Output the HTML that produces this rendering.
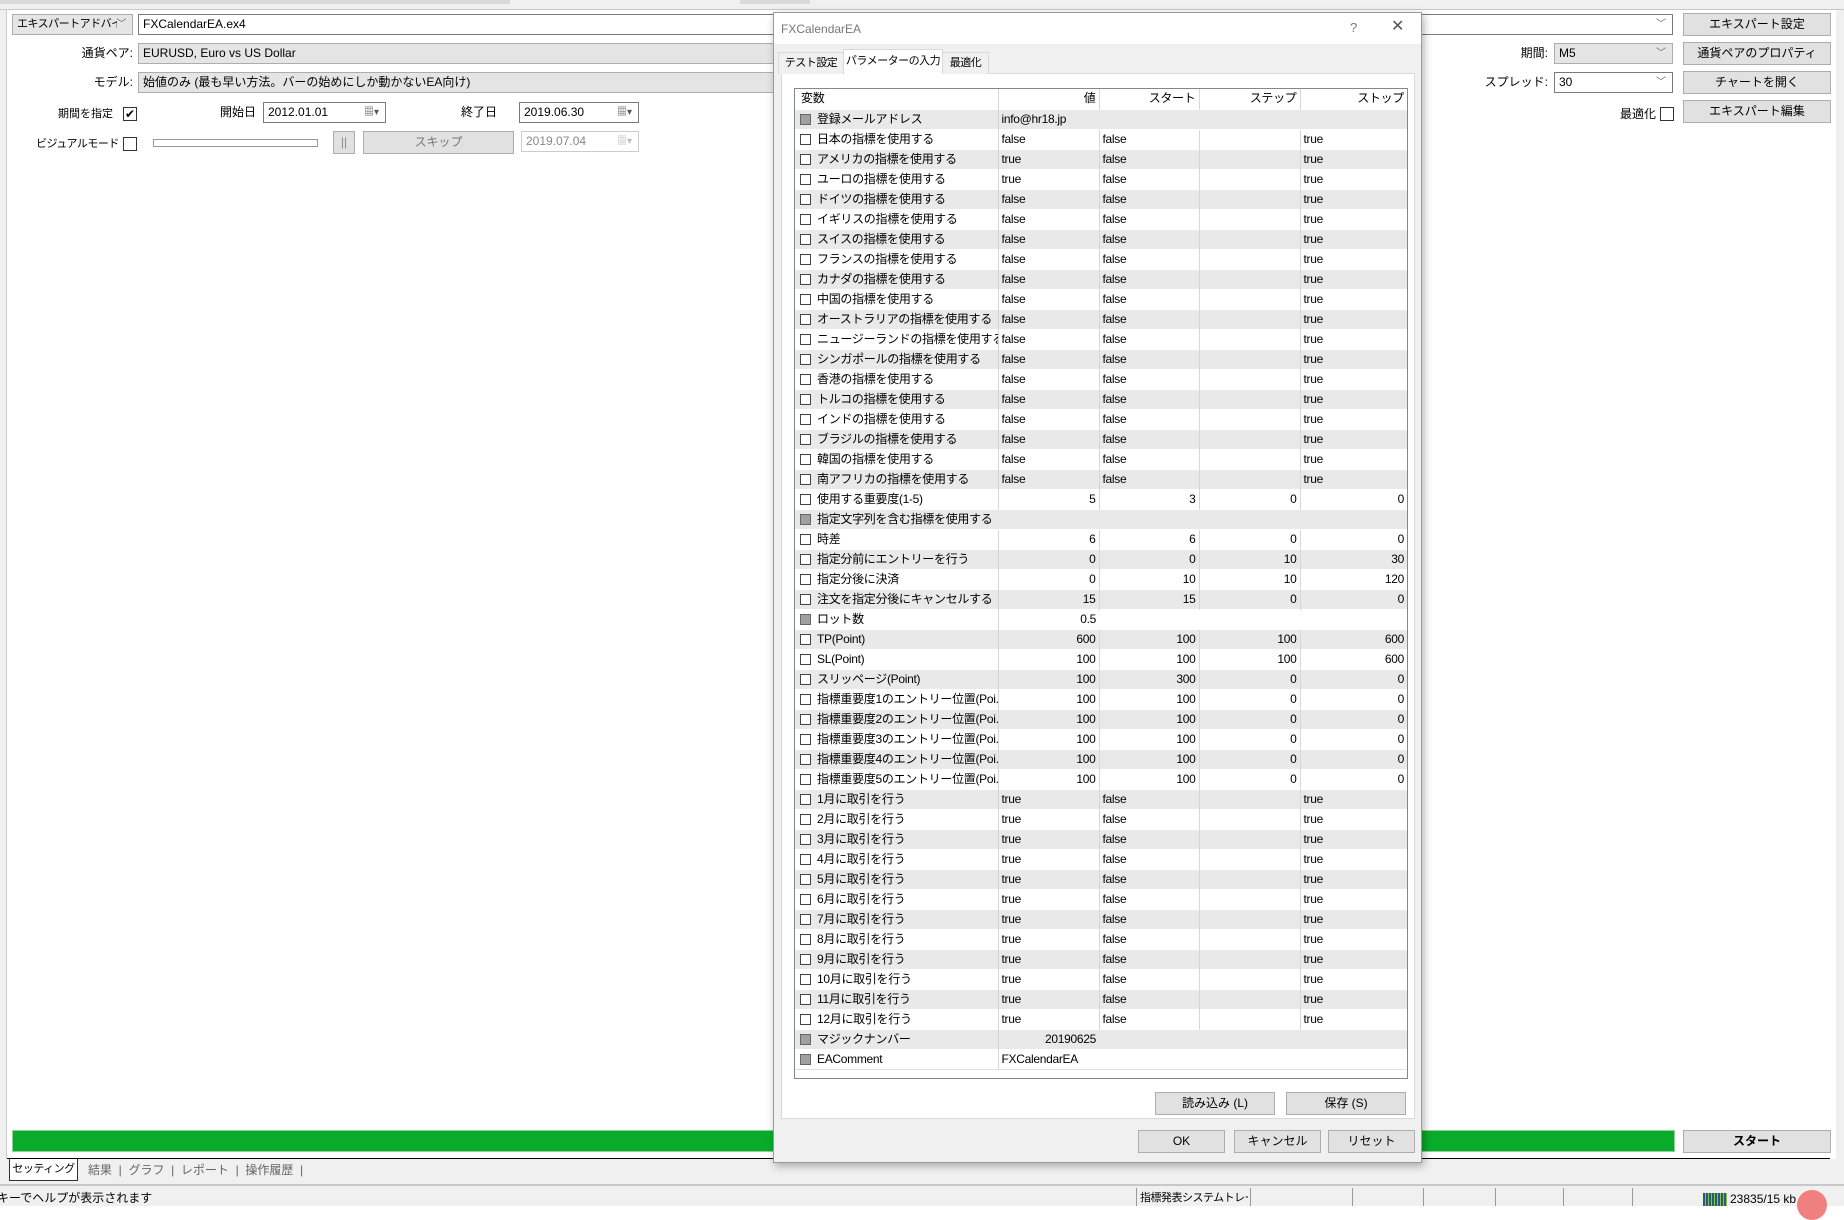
<!DOCTYPE html>
<html><head><meta charset="utf-8">
<style>
*{box-sizing:border-box;margin:0;padding:0}
body{width:1844px;height:1206px;overflow:hidden;background:#fff;font-family:"Liberation Sans","Noto Sans CJK JP",sans-serif;font-size:12px;color:#000;position:relative;white-space:nowrap}
.a{position:absolute}
.inp{position:absolute;border:1px solid #7a7a7a;background:#fff;height:21px;line-height:19px;padding-left:4px;white-space:nowrap;overflow:hidden}
.grey{background:#e5e5e5;border-color:#adadad}
.btn{position:absolute;border:1px solid #adadad;background:#e1e1e1;text-align:center;line-height:21px;height:23px;white-space:nowrap;overflow:hidden}
.lbl{position:absolute;line-height:20px;white-space:nowrap}
.cb{position:absolute;width:14px;height:14px;border:1px solid #333;background:#fff}
.dd{position:absolute;right:6px;top:0;color:#666;font-size:10px}
table{border-collapse:collapse;table-layout:fixed}
td{height:20px;padding:0 3px;white-space:nowrap;overflow:hidden;border-left:1px solid #d6d6d6;border-top:1px solid #fff;font-size:12px;line-height:19px;letter-spacing:-0.3px}
tr.g td{background:#e9e9e9}
td.r{text-align:right}
td:first-child{border-left:none;padding-left:22px;position:relative}
.c{position:absolute;left:5px;top:4px;width:11px;height:11px;border:1px solid #444;background:#fff}
.cg{background:#a0a0a0;border-color:#666}
.tab{position:absolute;border:1px solid #d9d9d9;border-bottom:none;text-align:center;font-size:11px;white-space:nowrap;letter-spacing:-0.5px}
</style></head><body>
<div class="a" style="left:0;top:0;width:1844px;height:10px;background:#f0f0f0;border-bottom:1px solid #c8c8c8"></div>
<div class="a" style="left:0;top:0;width:510px;height:4px;background:#d9d9d9"></div>
<div class="a" style="left:740px;top:0;width:70px;height:4px;background:#d9d9d9"></div>
<div class="a" style="left:0;top:10px;width:7px;height:1175px;background:#f0f0f0;border-right:1px solid #ccc"></div>
<div class="a" style="left:1836px;top:10px;width:8px;height:1175px;background:#f0f0f0"></div>

<div class="inp grey" style="left:12px;top:14px;width:121px;font-size:11px;letter-spacing:-0.5px">エキスパートアドバイ<span class="dd" style="background:#e5e5e5">﹀</span></div>
<div class="inp" style="left:138px;top:14px;width:1535px">FXCalendarEA.ex4<span class="dd">﹀</span></div>
<div class="btn" style="left:1683px;top:13px;width:148px">エキスパート設定</div>

<div class="lbl" style="left:40px;top:43px;width:93px;text-align:right">通貨ペア:</div>
<div class="inp grey" style="left:138px;top:43px;width:700px">EURUSD, Euro vs US Dollar</div>
<div class="lbl" style="left:1500px;top:43px;width:48px;text-align:right">期間:</div>
<div class="inp grey" style="left:1554px;top:43px;width:119px">M5<span class="dd">﹀</span></div>
<div class="btn" style="left:1683px;top:42px;width:148px">通貨ペアのプロパティ</div>

<div class="lbl" style="left:40px;top:72px;width:93px;text-align:right">モデル:</div>
<div class="inp grey" style="left:138px;top:72px;width:700px">始値のみ (最も早い方法。バーの始めにしか動かないEA向け)</div>
<div class="lbl" style="left:1450px;top:72px;width:98px;text-align:right">スプレッド:</div>
<div class="inp" style="left:1554px;top:72px;width:119px">30<span class="dd">﹀</span></div>
<div class="btn" style="left:1683px;top:71px;width:148px">チャートを開く</div>

<div class="lbl" style="left:58px;top:104px;font-size:11px">期間を指定</div>
<div class="cb" style="left:123px;top:107px;font-size:12px;line-height:12px;text-align:center">✔</div>
<div class="lbl" style="left:220px;top:102px">開始日</div>
<div class="inp" style="left:263px;top:102px;width:123px">2012.01.01<span class="dd" style="color:#555">▦▾</span></div>
<div class="lbl" style="left:461px;top:102px">終了日</div>
<div class="inp" style="left:519px;top:102px;width:120px">2019.06.30<span class="dd" style="color:#555">▦▾</span></div>
<div class="lbl" style="left:1620px;top:104px">最適化</div>
<div class="cb" style="left:1660px;top:107px"></div>
<div class="btn" style="left:1683px;top:100px;width:148px">エキスパート編集</div>

<div class="lbl" style="left:36px;top:134px;font-size:11px;letter-spacing:-0.5px">ビジュアルモード</div>
<div class="cb" style="left:123px;top:137px"></div>
<div class="a" style="left:153px;top:139px;width:165px;height:8px;border:1px solid #999;background:#fff"></div>
<div class="btn" style="left:333px;top:131px;width:22px;color:#888">||</div>
<div class="btn" style="left:363px;top:131px;width:151px;color:#777">スキップ</div>
<div class="inp" style="left:521px;top:131px;width:118px;color:#888;border-color:#ccc">2019.07.04<span class="dd" style="color:#bbb">▦▾</span></div>

<div class="a" style="left:12px;top:1130px;width:1663px;height:22px;background:#09ab2b;border:1px solid #8fcf9c"></div>
<div class="btn" style="left:1683px;top:1130px;width:148px;font-weight:bold">スタート</div>
<div class="a" style="left:7px;top:1158px;width:1823px;height:1px;background:#000"></div>
<div class="a" style="left:0;top:1159px;width:1844px;height:47px;background:#f0f0f0"></div>
<div class="a" style="left:9px;top:1159px;width:69px;height:22px;background:#fff;border:1px solid #333;border-top:none;text-align:center;line-height:20px;font-size:11px;letter-spacing:-0.5px">セッティング</div>
<div class="lbl" style="left:88px;top:1160px;color:#666">結果 &nbsp;|&nbsp; グラフ &nbsp;|&nbsp; レポート &nbsp;|&nbsp; 操作履歴 &nbsp;|</div>
<div class="a" style="left:0;top:1184px;width:1844px;height:2px;background:#c8c8c8"></div>
<div class="lbl" style="left:-3px;top:1188px">キーでヘルプが表示されます</div>
<div class="a" style="left:1136px;top:1188px;width:1px;height:18px;background:#999"></div>
<div class="lbl" style="left:1140px;top:1188px;font-size:11px;letter-spacing:-0.5px;width:108px;overflow:hidden">指標発表システムトレー</div>
<div class="a" style="left:1250px;top:1188px;width:1px;height:18px;background:#999"></div>
<div class="a" style="left:1352px;top:1188px;width:1px;height:18px;background:#999"></div>
<div class="a" style="left:1423px;top:1188px;width:1px;height:18px;background:#999"></div>
<div class="a" style="left:1495px;top:1188px;width:1px;height:18px;background:#999"></div>
<div class="a" style="left:1563px;top:1188px;width:1px;height:18px;background:#999"></div>
<div class="a" style="left:1632px;top:1188px;width:1px;height:18px;background:#999"></div>
<div class="a" style="left:1703px;top:1193px;width:24px;height:13px;background:repeating-linear-gradient(90deg,#1f5f7a 0 2px,#9bbd3a 2px 3px)"></div>
<div class="lbl" style="left:1730px;top:1189px">23835/15 kb</div>
<div class="a" style="left:1797px;top:1190px;width:30px;height:30px;border-radius:50%;background:#f08080"></div>

<div class="a" style="left:773px;top:12px;width:649px;height:1151px;background:#f0f0f0;border:1px solid #9a9a9a;box-shadow:2px 3px 8px rgba(0,0,0,.3)">
 <div class="a" style="left:0;top:0;width:647px;height:31px;background:#fff"></div>
 <div class="lbl" style="left:7px;top:6px;color:#777;font-size:12px">FXCalendarEA</div>
 <div class="lbl" style="left:576px;top:5px;color:#777;font-size:13px">?</div>
 <div class="lbl" style="left:617px;top:4px;color:#555;font-size:16px">✕</div>
 <div class="a" style="left:7px;top:60px;width:634px;height:1046px;background:#fff;border:1px solid #d9d9d9"></div>
 <div class="tab" style="left:4px;top:39px;width:66px;height:22px;background:#f0f0f0;line-height:20px">テスト設定</div>
 <div class="tab" style="left:69px;top:36px;width:100px;height:25px;background:#fff;line-height:22px">パラメーターの入力</div>
 <div class="tab" style="left:168px;top:39px;width:47px;height:22px;background:#f0f0f0;line-height:20px">最適化</div>
 <div class="a" style="left:20px;top:75px;width:614px;height:991px;border:1px solid #828790;background:#fff;overflow:hidden">
<table style="width:612px">
<colgroup><col style="width:203px"><col style="width:101px"><col style="width:100px"><col style="width:101px"><col style="width:107px"></colgroup>
<tr><td style="padding-left:6px;border-top:none">変数</td><td class="r" style="border-top:none">値</td><td class="r" style="border-top:none">スタート</td><td class="r" style="border-top:none">ステップ</td><td class="r" style="border-top:none">ストップ</td></tr>
<tr class="g"><td><i class="c cg"></i>登録メールアドレス</td><td colspan="4">info@hr18.jp</td></tr>
<tr><td><i class="c"></i>日本の指標を使用する</td><td>false</td><td>false</td><td></td><td>true</td></tr>
<tr class="g"><td><i class="c"></i>アメリカの指標を使用する</td><td>true</td><td>false</td><td></td><td>true</td></tr>
<tr><td><i class="c"></i>ユーロの指標を使用する</td><td>true</td><td>false</td><td></td><td>true</td></tr>
<tr class="g"><td><i class="c"></i>ドイツの指標を使用する</td><td>false</td><td>false</td><td></td><td>true</td></tr>
<tr><td><i class="c"></i>イギリスの指標を使用する</td><td>false</td><td>false</td><td></td><td>true</td></tr>
<tr class="g"><td><i class="c"></i>スイスの指標を使用する</td><td>false</td><td>false</td><td></td><td>true</td></tr>
<tr><td><i class="c"></i>フランスの指標を使用する</td><td>false</td><td>false</td><td></td><td>true</td></tr>
<tr class="g"><td><i class="c"></i>カナダの指標を使用する</td><td>false</td><td>false</td><td></td><td>true</td></tr>
<tr><td><i class="c"></i>中国の指標を使用する</td><td>false</td><td>false</td><td></td><td>true</td></tr>
<tr class="g"><td><i class="c"></i>オーストラリアの指標を使用する</td><td>false</td><td>false</td><td></td><td>true</td></tr>
<tr><td><i class="c"></i>ニュージーランドの指標を使用する</td><td>false</td><td>false</td><td></td><td>true</td></tr>
<tr class="g"><td><i class="c"></i>シンガポールの指標を使用する</td><td>false</td><td>false</td><td></td><td>true</td></tr>
<tr><td><i class="c"></i>香港の指標を使用する</td><td>false</td><td>false</td><td></td><td>true</td></tr>
<tr class="g"><td><i class="c"></i>トルコの指標を使用する</td><td>false</td><td>false</td><td></td><td>true</td></tr>
<tr><td><i class="c"></i>インドの指標を使用する</td><td>false</td><td>false</td><td></td><td>true</td></tr>
<tr class="g"><td><i class="c"></i>ブラジルの指標を使用する</td><td>false</td><td>false</td><td></td><td>true</td></tr>
<tr><td><i class="c"></i>韓国の指標を使用する</td><td>false</td><td>false</td><td></td><td>true</td></tr>
<tr class="g"><td><i class="c"></i>南アフリカの指標を使用する</td><td>false</td><td>false</td><td></td><td>true</td></tr>
<tr><td><i class="c"></i>使用する重要度(1-5)</td><td class="r">5</td><td class="r">3</td><td class="r">0</td><td class="r">0</td></tr>
<tr class="g"><td colspan="5"><i class="c cg"></i>指定文字列を含む指標を使用する</td></tr>
<tr><td><i class="c"></i>時差</td><td class="r">6</td><td class="r">6</td><td class="r">0</td><td class="r">0</td></tr>
<tr class="g"><td><i class="c"></i>指定分前にエントリーを行う</td><td class="r">0</td><td class="r">0</td><td class="r">10</td><td class="r">30</td></tr>
<tr><td><i class="c"></i>指定分後に決済</td><td class="r">0</td><td class="r">10</td><td class="r">10</td><td class="r">120</td></tr>
<tr class="g"><td><i class="c"></i>注文を指定分後にキャンセルする</td><td class="r">15</td><td class="r">15</td><td class="r">0</td><td class="r">0</td></tr>
<tr><td><i class="c cg"></i>ロット数</td><td class="r">0.5</td><td colspan="3" style="border-left:none"></td></tr>
<tr class="g"><td><i class="c"></i>TP(Point)</td><td class="r">600</td><td class="r">100</td><td class="r">100</td><td class="r">600</td></tr>
<tr><td><i class="c"></i>SL(Point)</td><td class="r">100</td><td class="r">100</td><td class="r">100</td><td class="r">600</td></tr>
<tr class="g"><td><i class="c"></i>スリッページ(Point)</td><td class="r">100</td><td class="r">300</td><td class="r">0</td><td class="r">0</td></tr>
<tr><td><i class="c"></i>指標重要度1のエントリー位置(Poi...</td><td class="r">100</td><td class="r">100</td><td class="r">0</td><td class="r">0</td></tr>
<tr class="g"><td><i class="c"></i>指標重要度2のエントリー位置(Poi...</td><td class="r">100</td><td class="r">100</td><td class="r">0</td><td class="r">0</td></tr>
<tr><td><i class="c"></i>指標重要度3のエントリー位置(Poi...</td><td class="r">100</td><td class="r">100</td><td class="r">0</td><td class="r">0</td></tr>
<tr class="g"><td><i class="c"></i>指標重要度4のエントリー位置(Poi...</td><td class="r">100</td><td class="r">100</td><td class="r">0</td><td class="r">0</td></tr>
<tr><td><i class="c"></i>指標重要度5のエントリー位置(Poi...</td><td class="r">100</td><td class="r">100</td><td class="r">0</td><td class="r">0</td></tr>
<tr class="g"><td><i class="c"></i>1月に取引を行う</td><td>true</td><td>false</td><td></td><td>true</td></tr>
<tr><td><i class="c"></i>2月に取引を行う</td><td>true</td><td>false</td><td></td><td>true</td></tr>
<tr class="g"><td><i class="c"></i>3月に取引を行う</td><td>true</td><td>false</td><td></td><td>true</td></tr>
<tr><td><i class="c"></i>4月に取引を行う</td><td>true</td><td>false</td><td></td><td>true</td></tr>
<tr class="g"><td><i class="c"></i>5月に取引を行う</td><td>true</td><td>false</td><td></td><td>true</td></tr>
<tr><td><i class="c"></i>6月に取引を行う</td><td>true</td><td>false</td><td></td><td>true</td></tr>
<tr class="g"><td><i class="c"></i>7月に取引を行う</td><td>true</td><td>false</td><td></td><td>true</td></tr>
<tr><td><i class="c"></i>8月に取引を行う</td><td>true</td><td>false</td><td></td><td>true</td></tr>
<tr class="g"><td><i class="c"></i>9月に取引を行う</td><td>true</td><td>false</td><td></td><td>true</td></tr>
<tr><td><i class="c"></i>10月に取引を行う</td><td>true</td><td>false</td><td></td><td>true</td></tr>
<tr class="g"><td><i class="c"></i>11月に取引を行う</td><td>true</td><td>false</td><td></td><td>true</td></tr>
<tr><td><i class="c"></i>12月に取引を行う</td><td>true</td><td>false</td><td></td><td>true</td></tr>
<tr class="g"><td><i class="c cg"></i>マジックナンバー</td><td class="r">20190625</td><td colspan="3" style="border-left:none"></td></tr>
<tr><td><i class="c cg"></i>EAComment</td><td colspan="4">FXCalendarEA</td></tr>
<tr><td colspan="5" style="border-top:1px solid #e0e0e0"></td></tr>
</table>
 </div>
 <div class="btn" style="left:381px;top:1079px;width:120px">読み込み (L)</div>
 <div class="btn" style="left:512px;top:1079px;width:120px">保存 (S)</div>
 <div class="btn" style="left:364px;top:1117px;width:87px">OK</div>
 <div class="btn" style="left:460px;top:1117px;width:87px">キャンセル</div>
 <div class="btn" style="left:554px;top:1117px;width:87px">リセット</div>
</div>
</body></html>
